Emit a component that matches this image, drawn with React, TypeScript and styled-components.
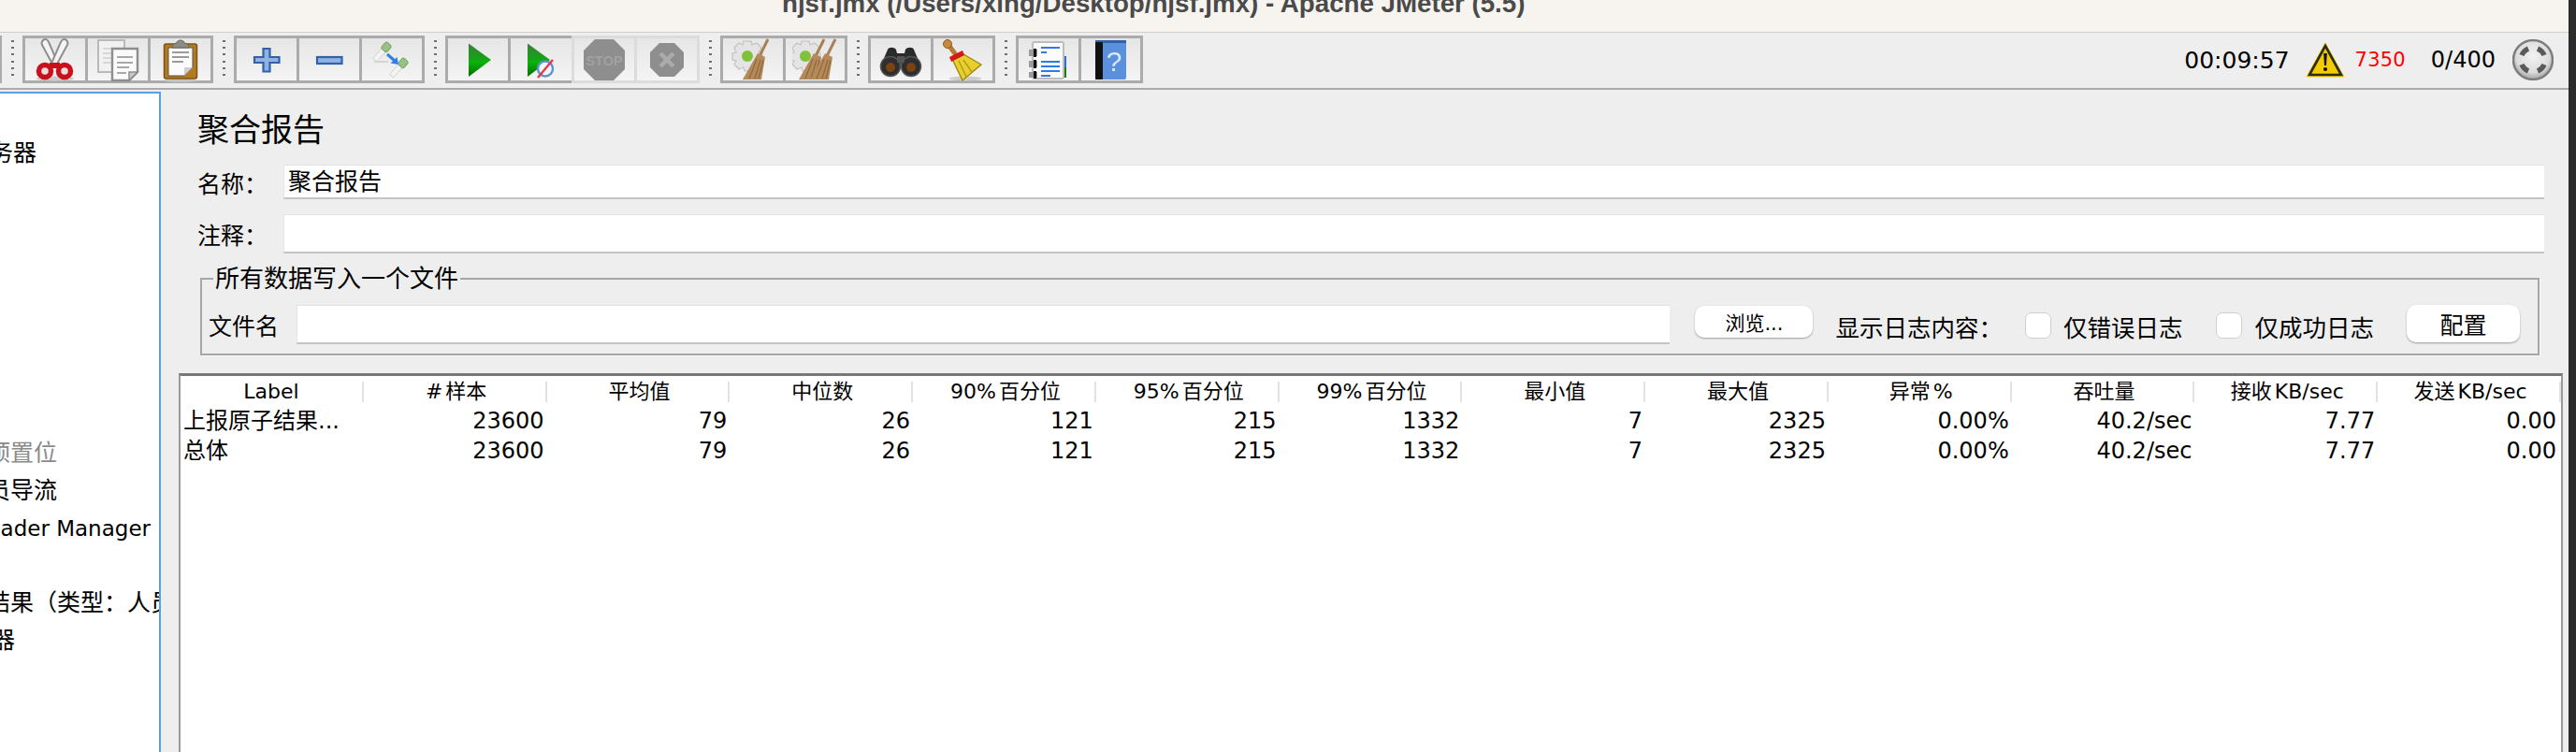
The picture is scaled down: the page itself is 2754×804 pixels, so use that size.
import React from 'react';
import styled, { createGlobalStyle } from 'styled-components';

const FONT = `"DejaVu Sans", "Noto Sans CJK SC", sans-serif`;

const GlobalStyle = createGlobalStyle`
  html, body {
    margin: 0;
    padding: 0;
    background: #2c2c2c;
    overflow: hidden;
  }
  body {
    font-family: ${FONT};
    color: #000;
  }
  * {
    box-sizing: border-box;
  }
`;

const Page = styled.div`
  display: flex;
  width: 2754px;
  height: 804px;
  overflow: hidden;
`;

const Win = styled.div`
  display: flex;
  flex-direction: column;
  width: 2746px;
  height: 804px;
  background: #eeeeee;
`;

const TitleBar = styled.div`
  height: 35px;
  flex: none;
  padding-left: 836px;
  overflow: hidden;
  background: #f7f4ef;
  border-bottom: 1px solid #cfcfcf;
`;

const TitleText = styled.div`
  margin-top: -14px;
  font-family: 'Liberation Sans', sans-serif;
  font-weight: 700;
  font-size: 27.7px;
  line-height: 36px;
  color: #4a4a4a;
  white-space: nowrap;
`;

const Toolbar = styled.div`
  display: flex;
  flex: none;
  align-items: flex-start;
  height: 61px;
  padding: 3px 16px 0 0;
  background: #eeeeee;
  border-bottom: 2px solid #ababab;
`;

const GroupStub = styled.div`
  width: 2px;
  height: 51px;
  background: #ababab;
`;

const Dots = styled.div`
  display: flex;
  flex: none;
  justify-content: center;
  width: 22px;
  padding-top: 5px;

  &::before {
    content: '';
    width: 3px;
    height: 41px;
    background: repeating-linear-gradient(#6f6f6f 0 2px, transparent 2px 7.2px);
  }
`;

const Group = styled.div<{ $count: number }>`
  display: flex;
  flex: none;
  width: ${(p) => p.$count * 68}px;
  height: 51px;
`;

const ToolButton = styled.div<{ $off?: boolean }>`
  display: flex;
  flex: 1 1 0;
  align-items: center;
  justify-content: center;
  border: 3px solid ${(p) => (p.$off ? '#dcdcdc' : '#ababab')};
  background: linear-gradient(#e6e6e6, #f4f4f4);

  & + & {
    margin-left: -3px;
  }
`;

const Icon = styled.svg`
  flex: none;
  width: 48px;
  height: 48px;
  filter: blur(0.5px);
`;

const Status = styled.div`
  display: flex;
  align-items: center;
  height: 51px;
  margin-left: auto;
  padding-top: 1px;
`;

const Clock = styled.span`
  font-size: 25px;
  margin-right: 17px;
`;

const WarnCount = styled.span`
  margin: 0 27px 0 11px;
  font-size: 21px;
  letter-spacing: 0.2px;
  color: #ff0000;
`;

const Threads = styled.span`
  font-size: 24px;
  margin-right: 18px;
`;

const Body = styled.div`
  display: flex;
  flex: 1;
  min-height: 0;
`;

const Tree = styled.div`
  flex: none;
  width: 172px;
  margin-top: 2px;
  padding-top: 44px;
  overflow: hidden;
  background: #fff;
  border-top: 2px solid #5aa0e0;
  border-right: 2px solid #5aa0e0;
`;

const TreeRow = styled.div<{ $end?: number; $muted?: boolean }>`
  display: flex;
  justify-content: flex-end;
  width: ${(p) => p.$end ?? 0}px;
  height: 40.1px;
  font-size: 25px;
  line-height: 40px;
  white-space: nowrap;
  color: ${(p) => (p.$muted ? '#8a8a8a' : '#000')};
`;

const TreeLatin = styled.span`
  font-size: 23px;
`;

const Main = styled.div`
  display: flex;
  flex: 1;
  flex-direction: column;
  min-width: 0;
  padding-left: 19px;
`;

const Form = styled.div`
  display: flex;
  flex: none;
  flex-direction: column;
  padding: 24px 0 0 20px;
`;

const Heading = styled.div`
  height: 38px;
  margin-bottom: 18px;
  font-size: 34px;
  line-height: 38px;
`;

const FieldRow = styled.div<{ $height: number; $gap?: number }>`
  display: flex;
  align-items: center;
  height: ${(p) => p.$height}px;
  margin: 0 26px ${(p) => p.$gap ?? 0}px 0;
`;

const FieldLabel = styled.span`
  flex: none;
  width: 92px;
  font-size: 25px;
`;

const Field = styled.div`
  flex: 1;
  align-self: stretch;
  padding-left: 4px;
  font-size: 25px;
  line-height: 36px;
  background: #fff;
  border-top: 1px solid #e2e2e2;
  border-left: 1px solid #e6e6e6;
  border-bottom: 2px solid #c4c4c4;
`;

const FileBox = styled.fieldset`
  margin: 10px 31px 0 3px;
  padding: 11px 19px 10px 7px;
  min-width: 0;
  border: 2px solid #a6a6a6;
  box-shadow: 1px 1px 0 #fbfbfb;
`;

const FileLegend = styled.legend`
  height: 34px;
  margin-left: 5px;
  padding: 0 2px;
  font-size: 26px;
  line-height: 34px;
`;

const FileRow = styled.div`
  display: flex;
  align-items: center;
  height: 42px;
`;

const FileLabel = styled.span`
  flex: none;
  margin-right: 19px;
  font-size: 25px;
`;

const OptionLabel = styled.span<{ $left?: number }>`
  flex: none;
  margin-left: ${(p) => p.$left ?? 0}px;
  padding-top: 3px;
  font-size: 25.5px;
`;

const PlainButton = styled.div<{ $wide?: boolean }>`
  display: flex;
  flex: none;
  align-items: center;
  justify-content: center;
  width: ${(p) => (p.$wide ? 121 : 126)}px;
  height: ${(p) => (p.$wide ? 40 : 34)}px;
  margin: ${(p) => (p.$wide ? '-3px 0 0 35px' : '-7px 0 0 27px')};
  font-size: ${(p) => (p.$wide ? 25 : 21)}px;
  background: #fff;
  border-radius: 10px;
  box-shadow: 0 1px 2px rgba(0, 0, 0, 0.35);
`;

const CheckBox = styled.span<{ $left: number }>`
  flex: none;
  width: 28px;
  height: 28px;
  margin: 2px 13px 0 ${(p) => p.$left}px;
  background: #fff;
  border: 1px solid #cfcfcf;
  border-radius: 7px;
`;

const Table = styled.div`
  flex: 1;
  min-height: 0;
  margin: 19px 6px 0 0;
  background: #fff;
  border-top: 3px solid #777;
  border-left: 2px solid #999;
  border-right: 2px solid #999;
`;

const HeadRow = styled.div`
  display: grid;
  grid-template-columns: repeat(13, 1fr);
  align-items: center;
  height: 32px;
  padding-top: 2px;
`;

const HeadCell = styled.div`
  height: 22px;
  padding-left: 4px;
  font-size: 22px;
  line-height: 22px;
  word-spacing: -4px;
  text-align: center;
  white-space: nowrap;
  border-right: 2px solid #e2e2e2;

  &:first-child {
    padding-left: 0;
  }
`;

const DataRow = styled.div`
  display: grid;
  grid-template-columns: repeat(13, 1fr);
  height: 32px;
  line-height: 32px;
  font-size: 24px;
`;

const DataCell = styled.div<{ $text?: boolean }>`
  padding: ${(p) => (p.$text ? '0 0 0 3px' : '0 3px 0 0')};
  text-align: ${(p) => (p.$text ? 'left' : 'right')};
  white-space: nowrap;

  &:last-child {
    padding-right: 5px;
  }
`;

const Edge = styled.div`
  flex: none;
  width: 8px;
  background: #2c2c2c;
`;

const CutIcon = () => (
  <Icon viewBox="0 0 48 48">
    <ellipse cx="24" cy="44" rx="20" ry="2.5" fill="#ccc" />
    <path d="M11 3C13 1 16 2 17 5L28 30 23 32 10 8C9 6 10 4 11 3Z" fill="#f4f4f4" stroke="#8f8f8f" strokeWidth="2" />
    <path d="M36 3C34 1 31 2 30 5L19 30 24 32 37 8C38 6 37 4 36 3Z" fill="#f4f4f4" stroke="#8f8f8f" strokeWidth="2" />
    <circle cx="13" cy="36" r="6.5" fill="#f2dcdc" stroke="#c9111c" strokeWidth="5.5" />
    <circle cx="34" cy="36" r="6.5" fill="#f2dcdc" stroke="#c9111c" strokeWidth="5.5" />
    <rect x="18" y="27" width="11" height="6" fill="#c9111c" />
  </Icon>
);

const CopyIcon = () => (
  <Icon viewBox="0 0 48 48">
    <rect x="3" y="3" width="28" height="34" fill="#f1f1f1" stroke="#b9b9b9" strokeWidth="2" />
    <path d="M8 12H26M8 17H26M8 22H22M8 27H26" stroke="#d8d8d8" strokeWidth="2" />
    <path d="M18 12H45V37L36 46H18Z" fill="#fafafa" stroke="#8e8e8e" strokeWidth="2.4" />
    <path d="M36 46V37H45Z" fill="#c9c9c9" stroke="#8e8e8e" strokeWidth="1.5" />
    <path d="M23 21H40M23 27H40M23 32H36M23 38H33" stroke="#a8a8a8" strokeWidth="2.2" />
  </Icon>
);

const PasteIcon = () => (
  <Icon viewBox="0 0 48 48">
    <ellipse cx="24" cy="46" rx="17" ry="1.8" fill="#c4c4c4" />
    <rect x="6.5" y="7" width="35" height="37" rx="2" fill="#b57a1e" stroke="#7d5312" strokeWidth="1.5" />
    <path d="M11 11H37V32L28 41H11Z" fill="#fbfbfb" stroke="#555" strokeWidth="1" />
    <path d="M28 41V32H37Z" fill="#cfcfcf" />
    <path d="M15 16H33M15 21H33M15 26H27" stroke="#9b9b9b" strokeWidth="2" />
    <path d="M15 11C15 7 18 6 20 6 20 2 28 2 28 6 30 6 33 7 33 11Z" fill="#8c8c80" stroke="#66665c" strokeWidth="1" />
  </Icon>
);

const AddIcon = () => (
  <Icon viewBox="0 0 48 48">
    <path d="M20.5 12H27.5V21H37.5V27H27.5V36.5H20.5V27H11V21H20.5Z" fill="#8fb2e0" stroke="#2f62a8" strokeWidth="2.2" />
  </Icon>
);

const RemoveIcon = () => (
  <Icon viewBox="0 0 48 48">
    <rect x="11" y="21" width="26.5" height="7" fill="#8fb2e0" stroke="#2f62a8" strokeWidth="2.2" />
  </Icon>
);

const Dropper = ({ x, y }: { x: number; y: number }) => (
  <g transform={`translate(${x} ${y}) rotate(42)`}>
    <rect x="-2.6" y="8" width="5.2" height="15" fill="#f4f4f4" stroke="#d6d6d6" strokeWidth="1" />
    <rect x="-4" y="0" width="8" height="9" rx="2" fill="#97c285" stroke="#7aa568" strokeWidth="1" />
  </g>
);

const ToggleIcon = () => (
  <Icon viewBox="0 0 48 48">
    <path d="M5 26H20" stroke="#d4d4d4" strokeWidth="2" />
    <Dropper x={21} y={7} />
    <Dropper x={39} y={24} />
    <path d="M19 18L27 25" stroke="#2f7fe8" strokeWidth="3" />
    <path d="M31 29L22.5 27.5 29.5 21Z" fill="#2f7fe8" />
  </Icon>
);

const PlayGradient = ({ id }: { id: string }) => (
  <defs>
    <linearGradient id={id} x1="0" y1="0" x2="0" y2="1">
      <stop offset="0" stopColor="#3c7f3c" />
      <stop offset="0.45" stopColor="#17a117" />
      <stop offset="0.55" stopColor="#0bb40b" />
      <stop offset="1" stopColor="#006e00" />
    </linearGradient>
  </defs>
);

const PlayIcon = () => (
  <Icon viewBox="0 0 48 48">
    <PlayGradient id="play-a" />
    <path d="M14 6.5L38 24 14 42Z" fill="url(#play-a)" />
  </Icon>
);

const PlayNoTimerIcon = () => (
  <Icon viewBox="0 0 48 48">
    <PlayGradient id="play-b" />
    <path d="M10 6.5L34 24 10 42Z" fill="url(#play-b)" />
    <circle cx="29" cy="33.5" r="8" fill="#f3f6fb" stroke="#5a93d6" strokeWidth="2.4" />
    <path d="M21 43L37 24" stroke="#e0394a" strokeWidth="2.4" />
  </Icon>
);

const StopIcon = () => (
  <Icon viewBox="0 0 48 48">
    <path d="M14 2H34L46 14V34L34 46H14L2 34V14Z" fill="#8e8e8e" />
    <text x="24" y="30" textAnchor="middle" fontFamily="Liberation Sans, sans-serif" fontWeight="700" fontSize="14.5" fill="#a2a2a2">
      STOP
    </text>
  </Icon>
);

const ShutdownIcon = () => (
  <Icon viewBox="0 0 48 48">
    <path d="M16 6H32L42 16V32L32 42H16L6 32V16Z" fill="#8e8e8e" />
    <path d="M17 17L31 31M31 17L17 31" stroke="#ababab" strokeWidth="4.5" />
  </Icon>
);

const Gear = ({ x, y }: { x: number; y: number }) => (
  <g transform={`translate(${x} ${y})`}>
    <path
      d="M-4-16H4L5-12 10-14 15-9 12-4 16-3V4L12 5 14 10 9 15 4 12 3 16H-3L-4 12-9 14-14 9-12 5-16 4V-3L-12-4-14-9-9-14-5-12Z"
      fill="#e4e4e4"
      stroke="#c2c2c2"
      strokeWidth="1.2"
    />
    <circle r="6" fill="#7fc13a" />
  </g>
);

const SmallBroom = ({ x }: { x: number }) => (
  <g transform={`translate(${x} 0)`}>
    <path d="M40 2L31 20" stroke="#a88052" strokeWidth="3" />
    <path d="M29 17L37 21 33 45 13 45Z" fill="#b58a5a" />
    <path d="M28 23L20 44M32 24L26 44M35 24L30 44" stroke="#8f683c" strokeWidth="1.2" />
  </g>
);

const ClearIcon = () => (
  <Icon viewBox="0 0 48 48">
    <Gear x={18} y={20} />
    <SmallBroom x={0} />
  </Icon>
);

const ClearAllIcon = () => (
  <Icon viewBox="0 0 48 48">
    <Gear x={14} y={20} />
    <SmallBroom x={-6} />
    <SmallBroom x={6} />
  </Icon>
);

const BinocularIcon = () => (
  <Icon viewBox="0 0 48 48">
    <path d="M10 13C11 10 17 10 19 13L20 17H28L29 13C31 10 37 10 38 13L44 27 25 30 23 30 4 27Z" fill="#2a2a2a" />
    <circle cx="13" cy="31" r="10.5" fill="#2e2e2e" stroke="#555" strokeWidth="1.5" />
    <circle cx="35" cy="31" r="10.5" fill="#2e2e2e" stroke="#555" strokeWidth="1.5" />
    <circle cx="13" cy="32" r="5" fill="#7a4312" />
    <circle cx="35" cy="32" r="5" fill="#7a4312" />
    <path d="M20 20H28V27H20Z" fill="#555" />
  </Icon>
);

const BroomIcon = () => (
  <Icon viewBox="0 0 48 48">
    <ellipse cx="27" cy="44" rx="17" ry="2.5" fill="#cdcdcd" />
    <path d="M9 8L18 20" stroke="#b57a2e" strokeWidth="5" />
    <circle cx="8" cy="7" r="4.5" fill="#c68a3c" stroke="#8c5a1c" strokeWidth="1" />
    <path d="M13 23L25 18 44 29 24 46Z" fill="#e9cf2e" stroke="#a08714" strokeWidth="1.4" />
    <path d="M20 25L28 42M25 24L34 37" stroke="#b69c18" strokeWidth="1.5" />
    <path d="M10 21L24 14 26 19 12 26Z" fill="#d41818" />
  </Icon>
);

const LogIcon = () => (
  <Icon viewBox="0 0 48 48">
    <rect x="39" y="20" width="4" height="12" fill="#2c6fd6" />
    <rect x="39" y="32" width="4" height="11" fill="#1a7d1a" />
    <rect x="7" y="5" width="33" height="39" rx="2" fill="#fbfbfb" stroke="#bdbdbd" strokeWidth="2" />
    <rect x="3" y="13" width="9" height="7" fill="#9a9a9a" />
    <rect x="3" y="25" width="9" height="7" fill="#9a9a9a" />
    <rect x="3" y="37" width="9" height="6" fill="#9a9a9a" />
    <rect x="8" y="12" width="3" height="9" fill="#111" />
    <rect x="8" y="24" width="3" height="9" fill="#111" />
    <rect x="8" y="36" width="3" height="8" fill="#111" />
    <path d="M16 11H36M16 26H36M16 31H36M16 36H36" stroke="#2b7ce8" strokeWidth="2" />
    <path d="M16 16H22M16 41H26" stroke="#2b7ce8" strokeWidth="2" />
  </Icon>
);

const HelpIcon = () => (
  <Icon viewBox="0 0 48 48">
    <rect x="8" y="4" width="33" height="41" rx="2" fill="#5a90dc" />
    <rect x="8" y="3" width="33" height="3" fill="#2f62a8" />
    <rect x="8" y="5" width="8" height="40" rx="1" fill="#111" />
    <text x="28" y="36" textAnchor="middle" fontFamily="Liberation Sans, sans-serif" fontSize="30" fill="#dce8f8">
      ?
    </text>
  </Icon>
);

const WarnIcon = () => (
  <svg width="42" height="38" viewBox="0 0 42 38">
    <path d="M21 1L41 37H1Z" fill="#f7d000" stroke="#f7d000" strokeWidth="1" />
    <path d="M21 4L38 35H4Z" fill="#f2cb00" stroke="#2b2b1a" strokeWidth="2.6" />
    <path d="M19.2 12H22.8L22 25H20Z" fill="#111" />
    <circle cx="21" cy="29" r="2.1" fill="#111" />
  </svg>
);

const GcIcon = () => (
  <svg width="44" height="44" viewBox="0 0 44 44">
    <defs>
      <radialGradient id="gc" cx="0.5" cy="0.4" r="0.6">
        <stop offset="0" stopColor="#f2f2f2" />
        <stop offset="0.7" stopColor="#dcdcdc" />
        <stop offset="1" stopColor="#a0a0a0" />
      </radialGradient>
    </defs>
    <circle cx="22" cy="22" r="21" fill="url(#gc)" stroke="#7d7d7d" strokeWidth="2.4" />
    <g fill="none" stroke="#5a5a5a" strokeWidth="5.5">
      <path d="M10 17C11.5 13.5 13.5 11.5 17 10" />
      <path d="M27 10C30.5 11.5 32.5 13.5 34 17" />
      <path d="M34 27C32.5 30.5 30.5 32.5 27 34" />
      <path d="M17 34C13.5 32.5 11.5 30.5 10 27" />
    </g>
  </svg>
);

type Tool = { Glyph: () => React.JSX.Element; off?: boolean };

const toolGroups: Tool[][] = [
  [{ Glyph: CutIcon }, { Glyph: CopyIcon }, { Glyph: PasteIcon }],
  [{ Glyph: AddIcon }, { Glyph: RemoveIcon }, { Glyph: ToggleIcon }],
  [{ Glyph: PlayIcon }, { Glyph: PlayNoTimerIcon }, { Glyph: StopIcon, off: true }, { Glyph: ShutdownIcon, off: true }],
  [{ Glyph: ClearIcon }, { Glyph: ClearAllIcon }],
  [{ Glyph: BinocularIcon }, { Glyph: BroomIcon }],
  [{ Glyph: LogIcon }, { Glyph: HelpIcon }],
];

const treeRows: { text?: React.ReactNode; end?: number; muted?: boolean }[] = [
  { text: '服务器', end: 39 },
  {},
  {},
  {},
  {},
  {},
  {},
  {},
  { text: '预置位', end: 61, muted: true },
  { text: '演员导流', end: 61 },
  { text: <TreeLatin>HTTP Header Manager</TreeLatin>, end: 161 },
  {},
  { text: '结果（类型：人员', end: 186 },
  { text: '断言器', end: 16 },
];

const columns = ['Label', '# 样本', '平均值', '中位数', '90% 百分位', '95% 百分位', '99% 百分位', '最小值', '最大值', '异常 %', '吞吐量', '接收 KB/sec', '发送 KB/sec'];

const rows = [
  ['上报原子结果...', '23600', '79', '26', '121', '215', '1332', '7', '2325', '0.00%', '40.2/sec', '7.77', '0.00'],
  ['总体', '23600', '79', '26', '121', '215', '1332', '7', '2325', '0.00%', '40.2/sec', '7.77', '0.00'],
];

export default function App() {
  return (
    <Page>
      <GlobalStyle />
      <Win>
        <TitleBar>
          <TitleText>hjsf.jmx (/Users/xing/Desktop/hjsf.jmx) - Apache JMeter (5.5)</TitleText>
        </TitleBar>
        <Toolbar>
          <GroupStub />
          {toolGroups.map((tools, i) => (
            <React.Fragment key={i}>
              <Dots />
              <Group $count={tools.length}>
                {tools.map(({ Glyph, off }, j) => (
                  <ToolButton key={j} $off={off}>
                    <Glyph />
                  </ToolButton>
                ))}
              </Group>
            </React.Fragment>
          ))}
          <Status>
            <Clock>00:09:57</Clock>
            <WarnIcon />
            <WarnCount>7350</WarnCount>
            <Threads>0/400</Threads>
            <GcIcon />
          </Status>
        </Toolbar>
        <Body>
          <Tree>
            {treeRows.map((row, i) => (
              <TreeRow key={i} $end={row.end} $muted={row.muted}>
                {row.text}
              </TreeRow>
            ))}
          </Tree>
          <Main>
            <Form>
              <Heading>聚合报告</Heading>
              <FieldRow $height={37} $gap={16}>
                <FieldLabel>名称：</FieldLabel>
                <Field>聚合报告</Field>
              </FieldRow>
              <FieldRow $height={42}>
                <FieldLabel>注释：</FieldLabel>
                <Field />
              </FieldRow>
              <FileBox>
                <FileLegend>所有数据写入一个文件</FileLegend>
                <FileRow>
                  <FileLabel>文件名</FileLabel>
                  <Field />
                  <PlainButton>浏览...</PlainButton>
                  <OptionLabel $left={24}>显示日志内容：</OptionLabel>
                  <CheckBox $left={24} />
                  <OptionLabel>仅错误日志</OptionLabel>
                  <CheckBox $left={36} />
                  <OptionLabel>仅成功日志</OptionLabel>
                  <PlainButton $wide>配置</PlainButton>
                </FileRow>
              </FileBox>
            </Form>
            <Table>
              <HeadRow>
                {columns.map((c) => (
                  <HeadCell key={c}>{c}</HeadCell>
                ))}
              </HeadRow>
              {rows.map((row, i) => (
                <DataRow key={i}>
                  {row.map((value, j) => (
                    <DataCell key={j} $text={j === 0}>
                      {value}
                    </DataCell>
                  ))}
                </DataRow>
              ))}
            </Table>
          </Main>
        </Body>
      </Win>
      <Edge />
    </Page>
  );
}
